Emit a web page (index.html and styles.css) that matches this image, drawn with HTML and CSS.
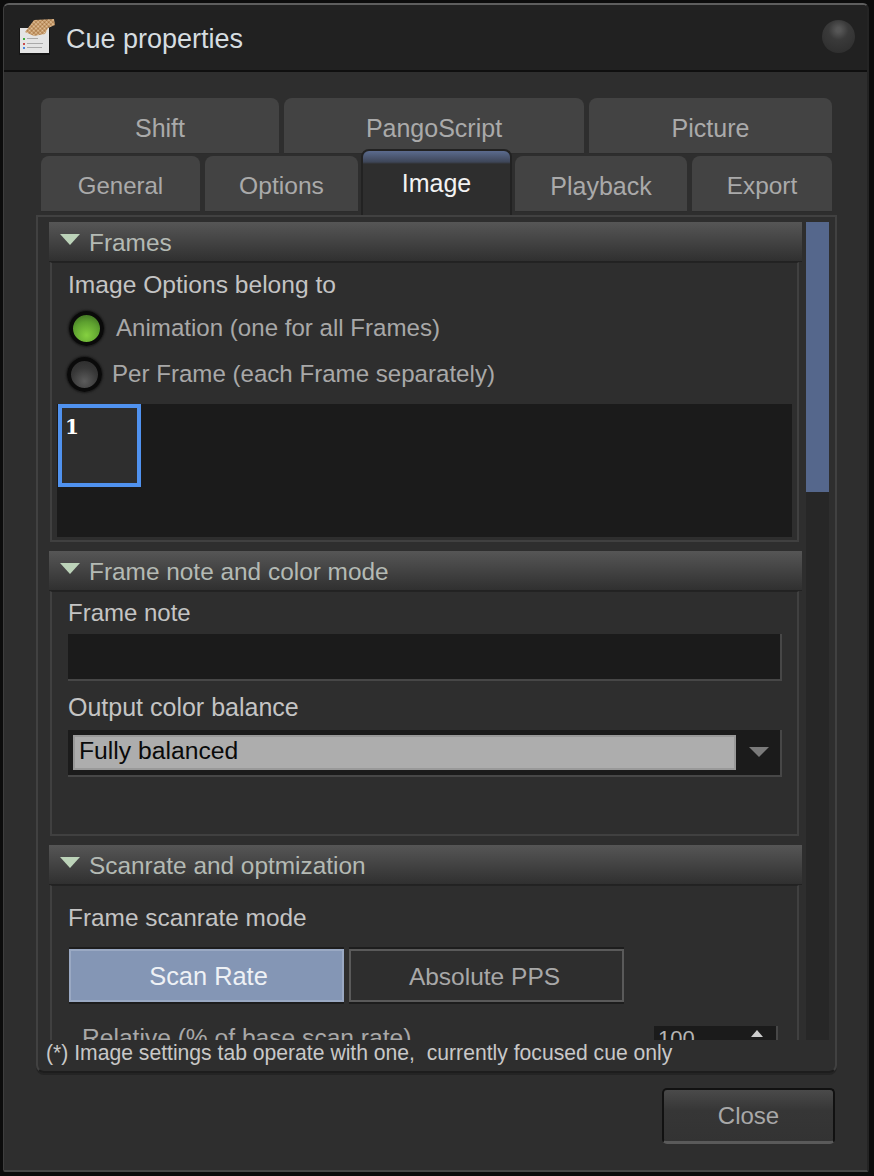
FILE: index.html
```html
<!DOCTYPE html>
<html lang="en">
<head>
<meta charset="utf-8">
<title>Cue properties</title>
<link rel="stylesheet" href="styles.css">
</head>
<body>
<div class="window">
  <header class="titlebar">
    <svg class="app-icon" width="36" height="36" viewBox="0 0 36 36">
      <defs>
        <pattern id="dither" width="3" height="3" patternUnits="userSpaceOnUse" patternTransform="rotate(45)">
          <rect width="3" height="3" fill="#c79a68"/>
          <rect width="1.5" height="1.5" fill="#e5c9a4"/>
          <rect x="1.5" y="1.5" width="1.5" height="1.5" fill="#a57647"/>
        </pattern>
      </defs>
      <rect x="0" y="9" width="31" height="27" fill="#151515"/>
      <rect x="1" y="9" width="29" height="25" fill="#e4e4e4"/>
      <rect x="4" y="19" width="2" height="2" fill="#3fae3f"/>
      <rect x="8" y="19" width="11" height="1" fill="#aaa"/>
      <rect x="4" y="24" width="2" height="2" fill="#c84a4a"/>
      <rect x="8" y="24" width="16" height="1" fill="#aaa"/>
      <rect x="4" y="28" width="2" height="2" fill="#4a86e0"/>
      <rect x="8" y="28" width="15" height="1" fill="#aaa"/>
      <path d="M6 13 L15 1 L35 0 L36 6 L29 9 L26 15 L15 17 Z" fill="url(#dither)"/>
    </svg>
    <h1 class="title">Cue properties</h1>
    <span class="led-off"></span>
  </header>
  <main class="client">
    <div class="tabs">
      <div class="tab-row">
        <div class="tab t-shift">Shift</div>
        <div class="tab t-pango">PangoScript</div>
        <div class="tab t-picture">Picture</div>
      </div>
      <div class="tab-row second">
        <div class="tab t-general">General</div>
        <div class="tab t-options">Options</div>
        <div class="tab active t-image">Image</div>
        <div class="tab t-playback">Playback</div>
        <div class="tab t-export">Export</div>
      </div>
    </div>
    <div class="panel">
      <div class="scroller">
        <div class="content">
          <section class="section s-frames">
            <div class="section-head"><span class="tri"></span>Frames</div>
            <div class="section-body">
              <div class="label l-options">Image Options belong to</div>
              <div class="radio r-on"><span class="led on"></span><span>Animation (one for all Frames)</span></div>
              <div class="radio r-off"><span class="led"></span><span>Per Frame (each Frame separately)</span></div>
              <div class="frame-list"><div class="frame-cell"><b>1</b></div></div>
            </div>
          </section>
          <section class="section s-note">
            <div class="section-head"><span class="tri"></span>Frame note and color mode</div>
            <div class="section-body">
              <div class="label l-note">Frame note</div>
              <div class="input"></div>
              <div class="label l-balance">Output color balance</div>
              <div class="select">
                <div class="select-value">Fully balanced</div>
                <span class="select-arrow"></span>
              </div>
            </div>
          </section>
          <section class="section s-scan">
            <div class="section-head"><span class="tri"></span>Scanrate and optmization</div>
            <div class="section-body">
              <div class="label l-mode">Frame scanrate mode</div>
              <div class="toggle">
                <div class="toggle-btn selected">Scan Rate</div>
                <div class="toggle-btn absolute">Absolute PPS</div>
              </div>
              <div class="spin-row">
                <span class="spin-label">Relative (% of base scan rate)</span>
                <div class="spin"><span>100</span><i class="spin-up"></i></div>
              </div>
            </div>
          </section>
        </div>
        <div class="scrollbar"><div class="thumb"></div></div>
      </div>
      <p class="footnote">(*) Image settings tab operate with one,&nbsp; currently focused cue only</p>
    </div>
    <div class="actions"><button class="close-btn" type="button">Close</button></div>
  </main>
</div>
</body>
</html>
```
FILE: styles.css
```css
* { box-sizing: border-box; }
html, body { margin: 0; height: 100%; }
body {
  background: #0c0c0c;
  font-family: "Liberation Sans", Arial, sans-serif;
  font-size: 22px;
  color: #b4b4b4;
  overflow: hidden;
}
.window {
  margin: 3px 5px 0 3px;
  height: 1169px;
  background: #2e2e2e;
  border-top: 2px solid #5e5e5e;
  border-left: 1px solid #3e3e3e;
  border-right: 2px solid #242424;
  border-bottom: 2px solid #474747;
  border-radius: 6px 6px 2px 2px;
  display: flex;
  flex-direction: column;
  overflow: hidden;
}
.titlebar {
  height: 67px;
  flex: none;
  background: #212121;
  border-bottom: 2px solid #0f0f0f;
  display: flex;
  align-items: center;
  padding: 0 12px 3px 15px;
}
.app-icon { flex: none; margin-top: 1px; }
.title {
  margin: 7px 0 0 11px;
  font-size: 27px;
  font-weight: 400;
  color: #d6dde0;
  flex: 1;
}
.led-off {
  width: 33px;
  height: 33px;
  border-radius: 50%;
  background: radial-gradient(circle at 50% 30%, #565656 0 8%, #3a3a3a 35%, #2b2b2b 100%);
}
.client {
  flex: 1;
  display: flex;
  flex-direction: column;
  padding: 26px 30px 0 32px;
  min-height: 0;
}
.tabs { padding: 0 3px 0 5px; flex: none; }
.tab-row { display: flex; height: 56px; }
.tab-row.second { margin-top: 2px; height: 56px; align-items: flex-end; }
.tab {
  height: 56px;
  background: #434343;
  border-radius: 8px 8px 0 0;
  border-bottom: 1px solid #2c2c2c;
  display: flex;
  align-items: center;
  justify-content: center;
  color: #aaa;
  font-size: 25px;
  padding-top: 5px;
}
.t-shift { width: 238px; margin-right: 5px; }
.t-pango { width: 300px; margin-right: 5px; }
.t-picture { width: 243px; }
.t-general { width: 159px; margin-right: 5px; font-size: 24px; }
.t-options { width: 153px; margin-right: 3px; font-size: 24.6px; }
.t-image { width: 151px; margin-right: 3px; }
.t-playback { width: 172px; margin-right: 5px; }
.t-export { width: 140px; font-size: 24.4px; }
.tab.active {
  position: relative;
  z-index: 1;
  height: 66px;
  margin-bottom: -3px;
  background: linear-gradient(#5b6b8e 0, #3e4658 11px, #2e2e2e 13px);
  border: 2px solid #222;
  border-bottom: 0;
  color: #f2f2f2;
  padding-top: 2px;
  padding-bottom: 2px;
}
.panel {
  height: 858px;
  flex: none;
  margin-top: 3px;
  border: 2px solid #414141;
  border-bottom-color: #1d1d1d;
  border-radius: 0 0 8px 8px;
  padding: 5px 4px 0 11px;
  display: flex;
  flex-direction: column;
  box-shadow: 0 2px 0 #242424;
}
.scroller {
  height: 818px;
  flex: none;
  display: flex;
  overflow: hidden;
}
.content { width: 753px; flex: none; }
.scrollbar { width: 23px; margin-left: 4px; background: #272727; flex: none; }
.thumb { height: 270px; background: #55678c; }
.section + .section { margin-top: 9px; }
.section-head {
  height: 40px;
  background: linear-gradient(#565656, #303030);
  border-bottom: 1px solid #222;
  display: flex;
  align-items: center;
  color: #b4bab4;
  font-size: 24.4px;
  padding: 2px 0 0 11px;
}
.tri {
  width: 0;
  height: 0;
  border-left: 10px solid transparent;
  border-right: 10px solid transparent;
  border-top: 11px solid #bcd3b9;
  margin: 0 9px 7px 0;
}
.section-body {
  margin: 0 3px 0 1px;
  border-left: 2px solid #404040;
  border-right: 2px solid #404040;
  border-bottom: 2px solid #404040;
  border-top: 1px solid #232323;
  padding: 0 5px 0 16px;
  display: flex;
  flex-direction: column;
  align-items: flex-start;
}
.s-frames .section-body { height: 280px; padding-left: 5px; }
.s-note .section-body { height: 245px; }
.s-scan .section-body { height: 300px; border-bottom: 0; }
.label { color: #c4c4c4; font-size: 24.6px; line-height: 30px; white-space: nowrap; }
.l-options { margin: 7px 0 0 11px; }
.radio { display: flex; align-items: center; font-size: 24.1px; line-height: 34px; color: #a8a8a8; }
.r-on { margin: 10px 0 0 12px; gap: 12px; height: 36px; }
.r-off { margin: 10px 0 0 10px; gap: 10px; height: 36px; }
.led {
  width: 35px;
  height: 35px;
  border-radius: 50%;
  border: 4px solid #0a0a0a;
  background: radial-gradient(circle at 50% 75%, #5c5c5c 0, #383838 55%, #2a2a2a 100%);
  box-shadow: 0 0 2px 1px #181818;
}
.led.on {
  background: radial-gradient(circle at 50% 75%, #85d040 0, #5da02f 55%, #36611f 100%);
}
.frame-list {
  margin-top: 12px;
  width: 735px;
  height: 133px;
  background: #1b1b1b;
  padding-left: 1px;
}
.frame-cell {
  width: 83px;
  height: 83px;
  background: #2e2e2e;
  border: 4px solid #5092ef;
  padding: 7px 0 0 3px;
  font-family: "DejaVu Serif", serif;
  font-size: 20px;
  line-height: 24px;
  color: #fff;
}
.l-note { margin-top: 6px; font-size: 24px; }
.input {
  margin-top: 6px;
  width: 714px;
  height: 47px;
  background: #1b1b1b;
  border-right: 2px solid #474747;
  border-bottom: 2px solid #474747;
}
.l-balance { margin-top: 11px; font-size: 25px; }
.select {
  margin-top: 8px;
  width: 714px;
  height: 47px;
  background: #1b1b1b;
  border-right: 2px solid #474747;
  border-bottom: 2px solid #474747;
  padding: 5px 0 0 5px;
  display: flex;
}
.select-value {
  width: 663px;
  height: 35px;
  background: #adadad;
  border: 2px solid #999;
  color: #0a0a0a;
  font-size: 24.7px;
  line-height: 28px;
  padding-left: 4px;
}
.select-arrow {
  width: 0;
  height: 0;
  margin: 12px 0 0 13px;
  border-left: 10px solid transparent;
  border-right: 10px solid transparent;
  border-top: 10px solid #7a7a7a;
}
.l-mode { margin-top: 17px; font-size: 24.4px; }
.toggle { margin: 16px 0 0 1px; display: flex; gap: 5px; }
.toggle-btn {
  width: 275px;
  height: 53px;
  display: flex;
  align-items: center;
  justify-content: center;
  font-size: 25.4px;
  color: #a8a8a8;
  border: 2px solid #5a5a5a;
  padding-top: 2px;
  box-shadow: 0 -2px 0 #1d1d1d, 0 2px 0 #1d1d1d;
}
.toggle-btn.absolute { font-size: 24.5px; padding-right: 4px; }
.toggle-btn.selected {
  background: #8496b5;
  border-color: #9aa9c3;
  color: #eef1f5;
  padding-left: 4px;
}
.spin-row {
  margin: 24px 0 0 14px;
  width: 696px;
  display: flex;
  justify-content: space-between;
  align-items: flex-start;
}
.spin-label { font-size: 24.6px; line-height: 24px; color: #a8a8a8; }
.spin {
  width: 124px;
  height: 46px;
  background: #1b1b1b;
  border-right: 2px solid #474747;
  font-size: 22px;
  padding-left: 4px;
  display: flex;
  justify-content: space-between;
}
.spin-up {
  width: 0;
  height: 0;
  margin: 4px 13px 0 0;
  border-left: 6px solid transparent;
  border-right: 6px solid transparent;
  border-bottom: 7px solid #ccc;
}
.footnote {
  margin: 1px 0 0 -3px;
  font-size: 21.15px;
  line-height: 24px;
  color: #c8c8c8;
  white-space: nowrap;
}
.actions { display: flex; justify-content: flex-end; padding-top: 15px; margin-right: 2px; }
.close-btn {
  width: 173px;
  height: 56px;
  background: linear-gradient(#4a4a4a, #363636 40%, #333);
  border: 2px solid #111;
  border-bottom: 3px solid #5a5a5a;
  border-radius: 5px;
  font: 24px "Liberation Sans", Arial, sans-serif;
  color: #a8a8a8;
}
```
